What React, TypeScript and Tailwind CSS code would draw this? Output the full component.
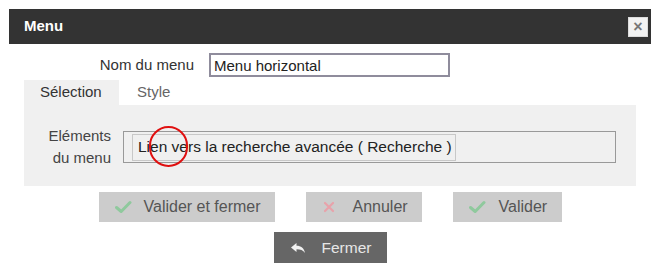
import React from 'react';

const font = { fontFamily: '"Liberation Sans", Arial, sans-serif' };

const CheckIcon: React.FC = () => (
  <svg width="17" height="14" viewBox="0 0 17 14" className="shrink-0">
    <path d="M1.5 7.5 L6.2 11.5 L15 2.5" fill="none" stroke="#8fc99d" strokeWidth="3" strokeLinecap="round" strokeLinejoin="round" />
  </svg>
);

const CrossIcon: React.FC = () => (
  <svg width="12" height="12" viewBox="0 0 12 12" className="shrink-0">
    <path d="M2 2 L10 10 M10 2 L2 10" fill="none" stroke="#e8a2aa" strokeWidth="2.2" strokeLinecap="round" />
  </svg>
);

const ReplyIcon: React.FC = () => (
  <svg width="16" height="12" viewBox="0 0 16 12" className="shrink-0">
    <path d="M1 5.5 L6.5 1 L6.5 3.8 C11 3.8 14 6 15 11 C13 8.2 10.5 7.2 6.5 7.2 L6.5 10 Z" fill="#f2f2f2" />
  </svg>
);

const App: React.FC = () => {
  return (
    <div className="min-h-screen bg-white pt-[9px] pl-[9px]" style={font}>
      <div className="w-[642px]">
        <header className="flex h-[35px] items-center justify-between bg-[#333333] pl-[15px] pr-[3px]">
          <h1 className="text-[15px] font-bold text-white">Menu</h1>
          <button className="flex h-[20px] w-[20px] items-center justify-center border border-[#dcdcdc] bg-[#f2f2f2] text-[16px] font-bold leading-none text-[#777]">
            ×
          </button>
        </header>

        <div className="mt-[9px] flex items-center">
          <label className="w-[185px] text-right text-[15px] text-[#333]">Nom du menu</label>
          <input
            defaultValue="Menu horizontal"
            className="ml-[15px] h-[24px] w-[241px] border-2 border-[#8f8c9c] px-[3px] text-[15px] text-[#222] outline-none"
            style={font}
          />
        </div>

        <div className="mx-[15px] mt-[3px]">
          <div className="flex h-[25px] items-center text-[15px]">
            <div className="flex h-full w-[95px] items-center bg-[#f0f0f0] pl-[16px] text-[#333]">Sélection</div>
            <div className="pl-[18px] text-[#666]">Style</div>
          </div>

          <div className="flex h-[81px] items-center bg-[#f0f0f0] pt-[3px]">
            <div className="w-[87px] text-right text-[15px] leading-[22px] text-[#444]">
              Eléments
              <br />
              du menu
            </div>
            <div className="relative ml-[12px] flex h-[32px] w-[493px] items-center border border-[#999] bg-[#f0f0f0] pl-[8px]">
              <div className="flex h-[27px] items-center border border-[#c8c8c8] bg-[#f0f0f0] pl-[5px] pr-[3px] text-[15.5px] text-[#222]">
                Lien vers la recherche avancée ( Recherche )
              </div>
              <div className="pointer-events-none absolute left-[25px] top-[-6px] h-[41px] w-[39px] rounded-full border-2 border-[#e01010]" />
            </div>
          </div>
        </div>

        <div className="mt-[6px] flex justify-center gap-[31px] text-[16px] text-[#555]">
          <button className="flex h-[30px] w-[176px] items-center gap-[12px] bg-[#cccccc] pl-[16px]">
            <CheckIcon />
            <span>Valider et fermer</span>
          </button>
          <button className="flex h-[30px] w-[116px] items-center gap-[18px] bg-[#cccccc] pl-[17px]">
            <CrossIcon />
            <span>Annuler</span>
          </button>
          <button className="flex h-[30px] w-[109px] items-center gap-[13px] bg-[#cccccc] pl-[16px]">
            <CheckIcon />
            <span>Valider</span>
          </button>
        </div>

        <div className="mt-[10px] flex justify-center">
          <button className="flex h-[31px] w-[113px] items-center gap-[16px] bg-[#666666] pl-[16px] text-[15.5px] text-[#e6e6e6]">
            <ReplyIcon />
            <span>Fermer</span>
          </button>
        </div>
      </div>
    </div>
  );
};

export default App;
